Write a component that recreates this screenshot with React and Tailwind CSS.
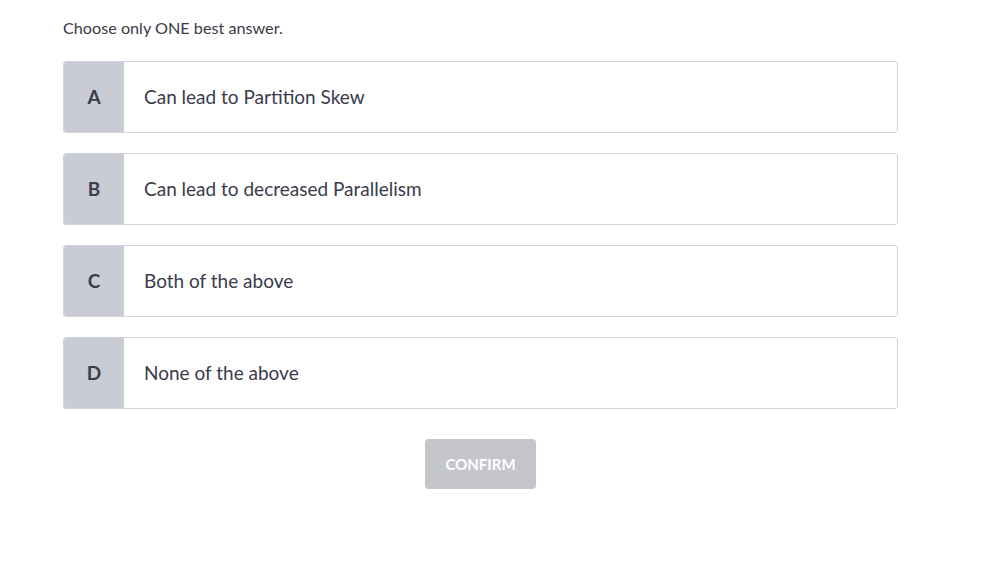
import React from 'react';

const options = [
  { key: 'A', text: 'Can lead to Partition Skew' },
  { key: 'B', text: 'Can lead to decreased Parallelism' },
  { key: 'C', text: 'Both of the above' },
  { key: 'D', text: 'None of the above' },
];

const App = () => {
  return (
    <div className="min-h-screen bg-white font-['Lato','Noto_Sans',sans-serif] text-[#3b3b4b]">
      <div className="w-[835px] ml-[63px] pt-[17px]">
        <p className="text-[16.2px] leading-[22px] text-[#3a3a45]">Choose only ONE best answer.</p>

        <div className="mt-[22px] flex flex-col gap-5">
          {options.map((opt) => (
            <div
              key={opt.key}
              className="flex h-[72px] rounded-[3px] border border-[#d2d3da] overflow-hidden"
            >
              <div className="w-[60px] shrink-0 bg-[#c9ccd5] flex items-center justify-center text-[19px] font-bold text-[#3a3d4a]">
                {opt.key}
              </div>
              <div className="flex items-center pl-5 text-[19px]">{opt.text}</div>
            </div>
          ))}
        </div>

        <div className="flex justify-center mt-[30px]">
          <button className="w-[111px] h-[50px] rounded-[4px] bg-[#c5c6cc] text-white text-[15px] font-bold">
            CONFIRM
          </button>
        </div>
      </div>
    </div>
  );
};

export default App;
